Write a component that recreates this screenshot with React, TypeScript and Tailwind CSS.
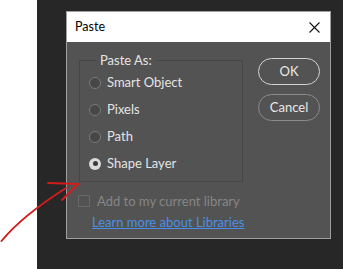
import React from "react";

function Radio({ checked }: { checked?: boolean }) {
  if (checked) {
    return (
      <div className="w-[12px] h-[12px] rounded-full bg-[#dadada] flex items-center justify-center">
        <div className="w-[5px] h-[5px] rounded-full bg-[#3a3a3a]" />
      </div>
    );
  }
  return <div className="w-[12px] h-[12px] rounded-full border border-[#7a7a7a] bg-[#474747]" />;
}

function RadioRow({ label, checked }: { label: string; checked?: boolean }) {
  return (
    <div className="h-[27px] flex items-center gap-[6px]">
      <Radio checked={checked} />
      <span className="text-[13px] leading-none text-[#e4e4e4]">{label}</span>
    </div>
  );
}

export default function App() {
  return (
    <div
      className="relative w-[343px] h-[269px] flex bg-[#272727] overflow-hidden"
      style={{ fontFamily: "Lato, 'Noto Sans', sans-serif" }}
    >
      <div className="w-[37px] bg-white" />
      <div className="flex-1 pl-[29px] pt-[11px]">
        <div className="w-[265px] h-[228px] flex flex-col border border-[#a0a0a0] bg-[#535353]">
          <div className="h-[30px] bg-white flex items-center justify-between pl-[8px] pr-[10px]">
            <span className="text-[12.5px] text-black">Paste</span>
            <svg width="11" height="11" viewBox="0 0 11 11">
              <path d="M0.5 0.5 L10.5 10.5 M10.5 0.5 L0.5 10.5" stroke="#111" strokeWidth="1.1" fill="none" />
            </svg>
          </div>
          <div className="flex-1 flex flex-col">
            <div className="flex items-start pt-[10px] pl-[12px]">
              <fieldset className="w-[164px] border border-[#464646] pl-[9px] pr-0 pt-[1px] pb-[4px] m-0">
                <legend className="ml-[7px] px-[4px] text-[13px] leading-[16px] text-[#e4e4e4]">Paste As:</legend>
                <RadioRow label="Smart Object" />
                <RadioRow label="Pixels" />
                <RadioRow label="Path" />
                <RadioRow label="Shape Layer" checked />
              </fieldset>
              <div className="ml-[15px] mt-[6px] flex flex-col gap-[9px]">
                <button className="w-[62px] h-[27px] rounded-full border-[1.5px] border-[#d4d4d4] text-[13px] text-[#e8e8e8] flex items-center justify-center">
                  OK
                </button>
                <button className="w-[62px] h-[27px] rounded-full border border-[#8c8c8c] text-[13px] text-[#e8e8e8] flex items-center justify-center">
                  Cancel
                </button>
              </div>
            </div>
            <div className="mt-[12px] pl-[11px] flex items-center gap-[7px] h-[14px]">
              <div className="w-[12px] h-[12px] border border-[#686868] bg-[#525252]" />
              <span className="text-[13px] leading-none text-[#868686]">Add to my current library</span>
            </div>
            <div className="mt-[7px] pl-[25px] h-[14px] flex items-center">
              <span className="text-[13px] leading-none text-[#4a8fe6] underline">Learn more about Libraries</span>
            </div>
          </div>
        </div>
      </div>
      <svg className="absolute left-0 top-0 pointer-events-none" width="343" height="269" viewBox="0 0 343 269">
        <path d="M1.5 241 Q22 216 66 188" stroke="#d41c1c" strokeWidth="1.9" fill="none" strokeLinecap="round" />
        <path d="M48 183 L78 184 L62 200" stroke="#d41c1c" strokeWidth="1.9" fill="none" strokeLinecap="round" strokeLinejoin="round" />
      </svg>
    </div>
  );
}
